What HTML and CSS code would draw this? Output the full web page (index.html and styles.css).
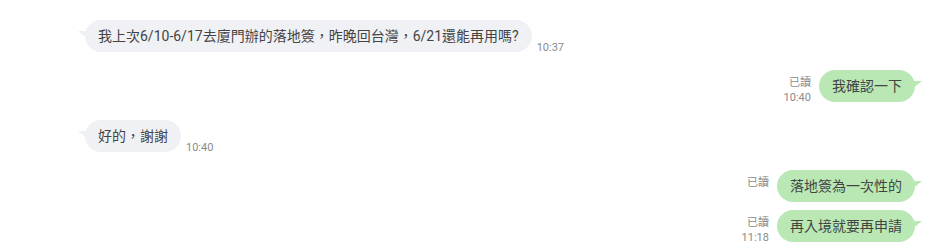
FILE: index.html
```html
<!DOCTYPE html>
<html lang="zh-Hant">
<head>
<meta charset="utf-8">
<title>Chat</title>
<link rel="stylesheet" href="styles.css">
</head>
<body>
<div class="chat">
  <div class="row in">
    <div class="bubble">我上次6/10-6/17去廈門辦的落地簽，昨晚回台灣，6/21還能再用嗎?</div>
    <div class="meta"><span class="read"></span><span class="time">10:37</span></div>
  </div>
  <div class="row out">
    <div class="meta"><span class="read">已讀</span><span class="time">10:40</span></div>
    <div class="bubble">我確認一下</div>
  </div>
  <div class="row in">
    <div class="bubble">好的，謝謝</div>
    <div class="meta"><span class="read"></span><span class="time">10:40</span></div>
  </div>
  <div class="row out">
    <div class="meta"><span class="read">已讀</span><span class="time"></span></div>
    <div class="bubble">落地簽為一次性的</div>
  </div>
  <div class="row out cont">
    <div class="meta"><span class="read">已讀</span><span class="time">11:18</span></div>
    <div class="bubble">再入境就要再申請</div>
  </div>
</div>
</body>
</html>
```
FILE: styles.css
```css
html, body {
  margin: 0;
  padding: 0;
  background: #ffffff;
}
body {
  width: 927px;
  height: 248px;
  overflow: hidden;
  font-family: Roboto, "Noto Sans CJK TC", sans-serif;
}
.chat {
  display: flex;
  flex-direction: column;
  padding: 20px 12px 0 85px;
}
.row {
  display: flex;
  align-items: flex-end;
  margin-top: 18px;
}
.row:first-child {
  margin-top: 0;
}
.row.cont {
  margin-top: 8px;
}
.row.out {
  justify-content: flex-end;
}
.bubble {
  position: relative;
  height: 32px;
  box-sizing: border-box;
  padding: 6px 13px;
  font-size: 14px;
  line-height: 20px;
  color: #444444;
  border-radius: 16px;
  white-space: nowrap;
}
.in .bubble {
  background: #eff1f4;
}
.out .bubble {
  background: #b9e8b5;
}
.bubble::before {
  content: "";
  position: absolute;
  top: 11px;
  width: 10px;
  height: 8px;
}
.in .bubble::before {
  left: -7px;
  background: #eff1f4;
  clip-path: polygon(0 0, 100% 0, 100% 100%);
}
.out .bubble::before {
  right: -7px;
  background: #b9e8b5;
  clip-path: polygon(0 0, 100% 0, 0 100%);
}
.meta {
  display: flex;
  flex-direction: column;
  font-size: 11px;
  line-height: 15px;
  color: #8a8a8a;
  height: 30px;
  margin-bottom: -3px;
}
.in .meta {
  margin-left: 5px;
  align-items: flex-start;
}
.out .meta {
  margin-right: 8px;
  align-items: flex-end;
}
.read, .time {
  height: 15px;
}
```
